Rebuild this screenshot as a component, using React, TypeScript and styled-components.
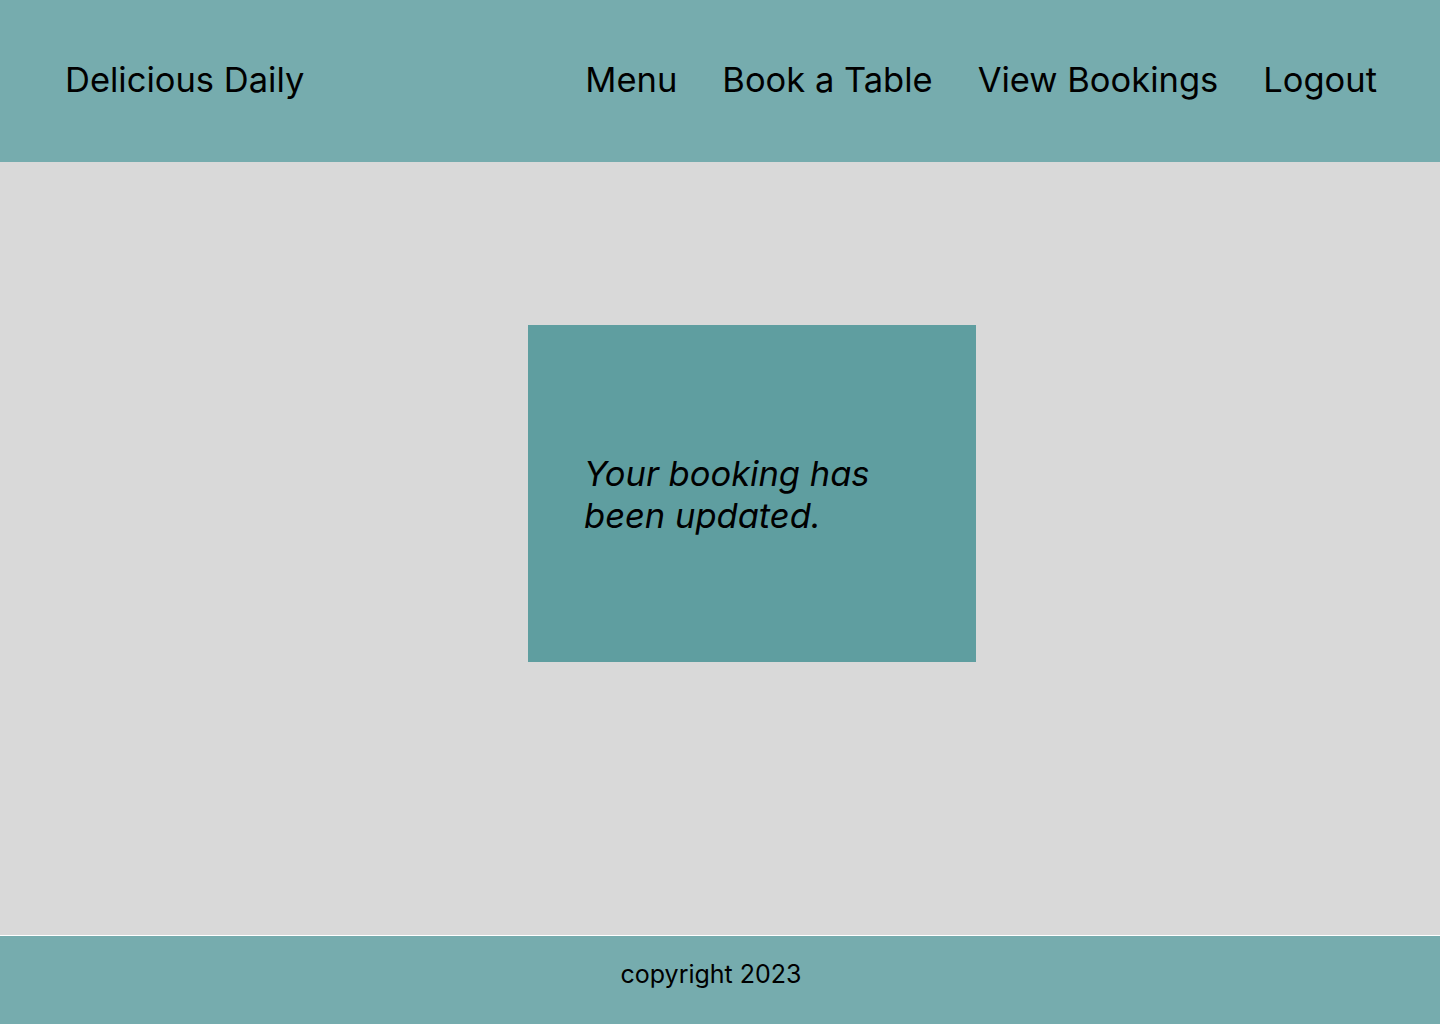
import React from "react";
import styled, { createGlobalStyle } from "styled-components";

const GlobalStyle = createGlobalStyle`
  html, body { margin: 0; padding: 0; }
  body { font-family: Inter, "Noto Sans", sans-serif; color: #000; background: #d9d9d9; }
  #root { min-height: 100vh; }
`;

const Page = styled.div`
  display: flex;
  flex-direction: column;
  min-height: 1024px;
`;

const Header = styled.header`
  height: 162px;
  box-sizing: border-box;
  background: #76acae;
  display: flex;
  align-items: center;
  justify-content: space-between;
  padding: 0 63px 3px 65px;
`;

const Brand = styled.div`
  font-size: 34.5px;
  font-weight: 400;
`;

const Nav = styled.nav`
  display: flex;
  gap: 45px;
`;

const NavLink = styled.a`
  font-size: 34.5px;
  color: #000;
  text-decoration: none;
`;

const Main = styled.main`
  flex: 1;
  display: flex;
  justify-content: flex-start;
  align-items: flex-start;
  padding: 163px 0 0 528px;
  background: #d9d9d9;
`;

const Card = styled.section`
  width: 448px;
  height: 337px;
  box-sizing: border-box;
  background: #5f9ea0;
  display: flex;
  align-items: center;
  padding: 2px 56px 0;
`;

const Message = styled.p`
  margin: 0;
  font-size: 34.5px;
  font-style: italic;
  line-height: 42px;
`;

const Footer = styled.footer`
  height: 89px;
  box-sizing: border-box;
  border-top: 1px solid #ffffff;
  background: #76acae;
  display: flex;
  align-items: center;
  justify-content: center;
  padding: 0 18px 12px 0;
  font-size: 25px;
`;

export default function App() {
  return (
    <Page>
      <GlobalStyle />
      <Header>
        <Brand>Delicious Daily</Brand>
        <Nav>
          <NavLink href="#">Menu</NavLink>
          <NavLink href="#">Book a Table</NavLink>
          <NavLink href="#">View Bookings</NavLink>
          <NavLink href="#">Logout</NavLink>
        </Nav>
      </Header>
      <Main>
        <Card>
          <Message>Your booking has been updated.</Message>
        </Card>
      </Main>
      <Footer>copyright 2023</Footer>
    </Page>
  );
}
